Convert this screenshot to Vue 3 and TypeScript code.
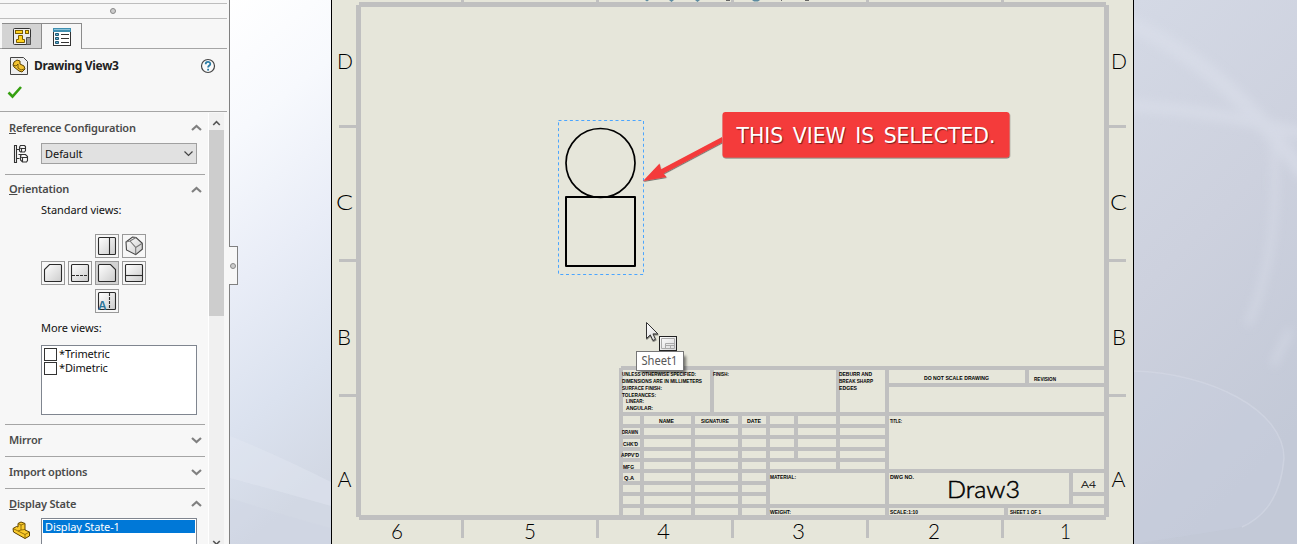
<script setup lang="ts">
type Rect = [number, number, number, number]
interface Label { t: string; x: number; y: number; w: number }

const spans = (xs: Array<[number, number]>, y: number, y2: number): Rect[] =>
  xs.map(([a, b]) => [a, y, b - a, y2 - y] as Rect)

const left: Array<[number, number]> = [[623, 640], [644, 691], [695, 738], [742, 766]]
const cells: Rect[] = [
  ...spans([[623, 710], [714, 836], [840, 885]], 370, 412),
  ...([[416, 424], [428, 435], [439, 447], [451, 458], [462, 469], [473, 481], [485, 492], [496, 504], [508, 515]] as Array<[number, number]>)
    .flatMap(([a, b]) => spans(left, a, b)),
  ...([[416, 424], [428, 435], [439, 447], [451, 458]] as Array<[number, number]>)
    .flatMap(([a, b]) => spans([[770, 794], [798, 836], [840, 885]], a, b)),
  ...spans([[770, 836], [840, 885]], 462, 469),
  ...spans([[770, 885]], 473, 504),
  ...spans([[770, 885]], 508, 515),
  ...spans([[889, 1025], [1029, 1104]], 370, 383),
  ...spans([[889, 1104]], 387, 412),
  ...spans([[889, 1104]], 416, 469),
  ...spans([[889, 1069]], 473, 504),
  ...spans([[1073, 1104]], 473, 492),
  ...spans([[1073, 1104]], 496, 504),
  ...spans([[889, 1004], [1008, 1104]], 508, 515),
]

const ticksY = [125, 259, 394]
const ticksX = [461, 596, 731, 866, 1001]

const zones: Label[] = [
  { t: 'D', x: 337, y: 69, w: 16 }, { t: 'C', x: 336, y: 210, w: 17 }, { t: 'B', x: 337, y: 345, w: 14 }, { t: 'A', x: 337.5, y: 487, w: 14 },
  { t: 'D', x: 1111, y: 69, w: 16 }, { t: 'C', x: 1110, y: 210, w: 17 }, { t: 'B', x: 1112, y: 345, w: 14 }, { t: 'A', x: 1111.5, y: 487, w: 14 },
  { t: '6', x: 391, y: 539, w: 12 }, { t: '5', x: 524, y: 539, w: 12 }, { t: '4', x: 657, y: 539, w: 13 },
  { t: '3', x: 792, y: 539, w: 13 }, { t: '2', x: 928, y: 539, w: 12 }, { t: '1', x: 1060, y: 539, w: 11 },
]

const notes: Label[] = [
  { t: 'UNLESS OTHERWISE SPECIFIED:', x: 622, y: 376, w: 74 },
  { t: 'DIMENSIONS ARE IN MILLIMETERS', x: 622, y: 383, w: 80 },
  { t: 'SURFACE FINISH:', x: 622, y: 390, w: 40 },
  { t: 'TOLERANCES:', x: 622, y: 397, w: 34 },
  { t: 'LINEAR:', x: 626, y: 403, w: 18 },
  { t: 'ANGULAR:', x: 626, y: 410, w: 27 },
  { t: 'FINISH:', x: 713, y: 376, w: 16 },
  { t: 'DEBURR AND', x: 839, y: 376, w: 33 },
  { t: 'BREAK SHARP', x: 839, y: 383, w: 34 },
  { t: 'EDGES', x: 839, y: 390, w: 18 },
  { t: 'NAME', x: 659, y: 423, w: 15 },
  { t: 'SIGNATURE', x: 701, y: 423, w: 28 },
  { t: 'DATE', x: 747, y: 423, w: 14 },
  { t: 'DRAWN', x: 622, y: 434, w: 16 },
  { t: "CHK'D", x: 623, y: 446, w: 15 },
  { t: "APPV'D", x: 621, y: 457, w: 18 },
  { t: 'MFG', x: 623, y: 469, w: 11 },
  { t: 'Q.A', x: 624, y: 480, w: 10 },
  { t: 'MATERIAL:', x: 770, y: 479, w: 26 },
  { t: 'WEIGHT:', x: 770, y: 514, w: 21 },
  { t: 'TITLE:', x: 890, y: 423, w: 12 },
  { t: 'DWG NO.', x: 890, y: 479, w: 24 },
  { t: 'SCALE:1:10', x: 890, y: 514, w: 28 },
  { t: 'SHEET 1 OF 1', x: 1010, y: 514, w: 31 },
  { t: 'DO NOT SCALE DRAWING', x: 924, y: 380, w: 65 },
  { t: 'REVISION', x: 1034, y: 381, w: 22 },
]

const moreViews = ['*Trimetric', '*Dimetric']
const collapsed = ['Mirror', 'Import options']
const viewButtons = ['top', 'iso', 'left', 'bottom', 'front', 'back', 'anno']
</script>

<template>
  <div class="app">
    <aside class="panel">
      <div class="grip"><i class="dot" /></div>
      <div class="tabs">
        <div class="tab">
          <svg width="20" height="20" viewBox="0 0 20 20">
            <rect x="1.5" y="1.5" width="17" height="16" rx="1" fill="#ececec" stroke="#333" />
            <rect x="3.500" y="3.500" width="7" height="3" fill="#ffd21f" stroke="#7a5d00" />
            <rect x="13.500" y="3.500" width="3" height="3" fill="#ffd21f" stroke="#7a5d00" />
            <path d="M6.500 8.500h4v4h2v3h-8v-3h2z" fill="#ffd21f" stroke="#7a5d00" />
            <path d="M14.500 17.500v-7h4v7z" fill="#999" stroke="#555" />
          </svg>
        </div>
        <div class="tab on">
          <svg width="20" height="20" viewBox="0 0 20 20">
            <rect x="1.500" y="1.500" width="17" height="17" fill="#fff" stroke="#333" />
            <rect x="1" y="1" width="18" height="4" fill="#3f8fb0" />
            <rect x="2" y="2" width="16" height="1" fill="#8cc4da" />
            <path d="M3.500 6.500h3v2h-3zM3.500 10.500h3v2h-3zM3.500 14.500h3v2h-3z" fill="#5fb0d0" stroke="#245a75" />
            <path d="M9 7.500h8M9 11.500h8M9 15.500h8" stroke="#333" />
          </svg>
        </div>
      </div>
      <div class="title">
        <svg width="18" height="18" viewBox="0 0 18 18">
          <path d="M.5 .5h13l4 4v13H.5z" fill="#eee" stroke="#444" />
          <path d="M3 8l1-3 3-2 3 1v3l4 2 1 3-3 3-3-1-5-4z" fill="#f2c230" stroke="#5c4200" />
          <path d="M3 8l3 1 2-2M8 7v4l3 2 3-1" fill="none" stroke="#5c4200" stroke-width=".8" />
        </svg>
        <b>Drawing View3</b>
        <svg class="help" width="16" height="16" viewBox="0 0 16 16">
          <circle cx="8" cy="8" r="6.500" fill="#fafafa" stroke="#444" stroke-width="1.200" />
          <path d="M5.700 6.200c0-3.200 4.600-3 4.600-.3 0 1.600-2.200 1.700-2.200 3.600" fill="none" stroke="#2b7ca5" stroke-width="1.800" />
          <rect x="7.200" y="10.800" width="1.800" height="1.800" fill="#2b7ca5" />
        </svg>
      </div>
      <div class="accept">
        <svg width="16" height="14" viewBox="0 0 16 14"><path d="M1.500 7.500l4 4 8.500-9.500" fill="none" stroke="#35a010" stroke-width="2.600" /></svg>
      </div>
      <div class="body">
        <div class="sections">
          <section class="ref">
            <header><span><u>R</u>eference Configuration</span><svg class="chev" viewBox="0 0 11 7"><path d="M1 6l4.500-4L10 6" /></svg></header>
            <div class="row">
              <svg width="16" height="20" viewBox="0 0 16 20" fill="none" stroke="#333" stroke-width="1.100">
                <path d="M1.500 1.500h2v17h-2zM3.500 5.500h3M3.500 14.500h3" />
                <path d="M6.500 3l1-1.500h4l1 1v4l-1 1.500h-4l-1-1zM6.500 4l2 .5h3.500M8.500 4.500V8" />
                <path d="M8.500 10.500h4l2 2v4l-1 1.500h-4l-2-2v-4zM7.500 13l2 .5h4.500M5.500 10.500h3M9.500 13.500V18" />
              </svg>
              <div class="select"><span>Default</span><svg viewBox="0 0 11 7"><path d="M1.500 1.500l4 4 4-4" fill="none" stroke="#444" stroke-width="1.200" /></svg></div>
            </div>
          </section>
          <section class="orient">
            <header><span><u>O</u>rientation</span><svg class="chev" viewBox="0 0 11 7"><path d="M1 6l4.500-4L10 6" /></svg></header>
            <p class="std">Standard views:</p>
            <div class="views">
              <div v-for="k in viewButtons" :key="k" class="vb" :class="k">
                <svg width="20" height="20" viewBox="0 0 20 20">
                  <defs><linearGradient :id="'g' + k" x2="1" y2="1"><stop stop-color="#fff" /><stop offset="1" stop-color="#ccc" /></linearGradient></defs>
                  <g :fill="`url(#g${k})`" stroke="#2b2b2b" stroke-width="1.100">
                    <path v-if="k === 'left'" d="M6.500 1.500h11q1 0 1 1v15q0 1-1 1h-15q-1 0-1-1v-11z" />
                    <path v-else-if="k === 'front'" d="M2.500 1.500h11l5 5v11q0 1-1 1h-15q-1 0-1-1v-15q0-1 1-1z" />
                    <template v-else-if="k === 'iso'">
                      <path d="M2 6l6.500-5 3.500.5 6.300 5.800v6l-6.600 5.400L2.500 14z" stroke="#444" />
                      <path d="M2 6l4-1 5.700 6.500v7M6 5l6-3.500M11.700 11.500l6.600-4.200" fill="none" stroke="#777" />
                    </template>
                    <rect v-else x="1.500" y="1.500" width="17" height="17" rx="1" />
                    <path v-if="k === 'top'" d="M12.500 2v16" />
                    <path v-if="k === 'back'" d="M2 12.500h16" />
                    <path v-if="k === 'bottom'" d="M2 12.500h16" stroke-dasharray="3 1" />
                    <path v-if="k === 'anno'" d="M12.500 2v16" stroke-dasharray="3 1" />
                  </g>
                  <text v-if="k === 'anno'" x="1" y="18.500" class="a">A</text>
                </svg>
              </div>
            </div>
            <p class="more">More views:</p>
            <div class="list">
              <label v-for="v in moreViews" :key="v"><i class="box" />{{ v }}</label>
            </div>
          </section>
          <section v-for="c in collapsed" :key="c" class="fold">
            <header><span>{{ c }}</span><svg class="chev" viewBox="0 0 11 7"><path d="M1 1l4.500 4L10 1" /></svg></header>
          </section>
          <section class="state">
            <header><span><u>D</u>isplay State</span><svg class="chev" viewBox="0 0 11 7"><path d="M1 6l4.500-4L10 6" /></svg></header>
            <div class="row">
              <svg width="19" height="20" viewBox="0 0 19 20">
                <path d="M1 8.500l3.500-2L6 7V3.500L9 2l4 1.500V10l4.500 2v4L13 18.500 1.500 12z" fill="#fbcb2c" stroke="#5c4200" />
                <path d="M1 8.500l5 2.500 7 3.500v4M6 3.500L9 5l4-1.500M9 5v5l-3 1M9 10l4-.5M13 14.500l4.500-2.500" fill="none" stroke="#7d5d00" stroke-width=".8" />
              </svg>
              <div class="states"><div class="sel">Display State-1</div></div>
            </div>
          </section>
        </div>
        <div class="scroll">
          <svg viewBox="0 0 11 7"><path d="M1.500 6l4-4 4 4" /></svg>
          <div class="thumb" />
          <svg class="dn" viewBox="0 0 11 7"><path d="M1.500 1l4 4 4-4" /></svg>
        </div>
      </div>
      <div class="flyout"><i class="dot" /></div>
    </aside>

    <main class="canvas">
      <svg width="1067" height="544" viewBox="230 0 1067 544">
        <defs>
          <linearGradient id="lbg" x2=".15" y2="1">
            <stop stop-color="#ffffff" /><stop offset=".25" stop-color="#f7f9fd" /><stop offset=".52" stop-color="#e9edf7" />
            <stop offset=".78" stop-color="#dbe2ef" /><stop offset="1" stop-color="#d2d8e4" />
          </linearGradient>
          <linearGradient id="rbg" x2=".3" y2="1">
            <stop stop-color="#d4d9e5" /><stop offset=".5" stop-color="#cdd1de" /><stop offset="1" stop-color="#c3c9d7" />
          </linearGradient>
          <linearGradient id="cur" x2="1" y2="1"><stop stop-color="#fff" /><stop offset="1" stop-color="#d8d8d8" /></linearGradient>
          <filter id="soft"><feGaussianBlur stdDeviation="5" /></filter>
          <filter id="drop" x="-20%" y="-20%" width="150%" height="150%"><feDropShadow dx=".4" dy="1" stdDeviation=".5" flood-color="#000" flood-opacity=".5" /></filter>
          <filter id="shade" x="-20%" y="-40%" width="150%" height="180%"><feGaussianBlur stdDeviation="1.500" /></filter>
        </defs>

        <rect x="230" width="101" height="544" fill="url(#lbg)" />
        <path d="M230 436q50 20 101 46v24q-50-14-101-28z" fill="#e4e9f3" opacity=".4" />
        <path d="M230 498q55 18 101 30v16H230z" fill="#ced4e1" opacity=".35" />
        <rect x="1134" width="163" height="544" fill="url(#rbg)" />
        <g fill="none" stroke="#dde1ec" filter="url(#soft)" opacity=".5">
          <path d="M1125 22Q1220 60 1305 175" stroke-width="16" />
          <path d="M1125 105Q1230 112 1305 135" stroke-width="12" />
          <path d="M1272 130Q1284 240 1248 325M1290 330L1273 365" stroke-width="6" />
        </g>
        <path d="M1134 371C1210 373 1284 410 1284 458Q1280 510 1242 527L1134 544z" fill="#cbd1e1" opacity=".3" />
        <path d="M1134 371C1210 373 1284 410 1284 458Q1280 510 1242 527" fill="none" stroke="#d8dce8" stroke-width="1.500" opacity=".5" />

        <g shape-rendering="crispEdges">
          <rect x="331" y="-1" width="803" height="546" fill="#000" />
          <rect x="332" y="-1" width="801" height="546" fill="#e6e6da" />
          <g fill="#c0c0c0">
            <rect x="359" y="2" width="747" height="5" /><rect x="359" y="515" width="747" height="5" />
            <rect x="356" y="5" width="5" height="512" /><rect x="1104" y="5" width="5" height="512" />
            <template v-for="y in ticksY" :key="y">
              <rect x="339" :y="y" width="17" height="3" /><rect x="1109" :y="y" width="17" height="3" />
            </template>
            <template v-for="x in ticksX" :key="x">
              <rect :x="x" y="0" width="3" height="2" /><rect :x="x" y="520" width="3" height="18" />
            </template>
            <path d="M621 366H1104V515H619V368h2z" />
          </g>
          <rect v-for="(c, i) in cells" :key="i" :x="c[0]" :y="c[1]" :width="c[2]" :height="c[3]" fill="#e6e6da" />
        </g>
        <path d="M645 0h4l-2 1.500zM669 0h5l-2.500 2zM695 0h5l-2.500 2zM752 0h8l-2 1.500h-4z" fill="#5d8ba0" />
        <path d="M726 0h4v1h-4zM781 0h1v1h-1zM805 0h4v1h-4z" fill="#666" />

        <g class="thin">
          <text v-for="(z, i) in zones" :key="i" :x="z.x" :y="z.y" :textLength="z.w" lengthAdjust="spacingAndGlyphs">{{ z.t }}</text>
        </g>
        <g class="notes">
          <text v-for="n in notes" :key="n.t" :x="n.x" :y="n.y" :textLength="n.w" lengthAdjust="spacingAndGlyphs">{{ n.t }}</text>
        </g>
        <text class="draw" x="947" y="498" textLength="73" lengthAdjust="spacingAndGlyphs">Draw3</text>
        <text class="size" x="1081" y="487.500" textLength="15" lengthAdjust="spacingAndGlyphs">A4</text>

        <rect x="558.500" y="120.500" width="85" height="154" fill="none" stroke="#4aa5ff" stroke-dasharray="3 2.700" />
        <circle cx="600.500" cy="163" r="34.500" fill="none" stroke="#000" stroke-width="1.700" />
        <rect x="566" y="197" width="69" height="69" fill="none" stroke="#000" stroke-width="2" stroke-linejoin="round" />

        <g filter="url(#drop)">
          <path d="M643 181L659.500 163.500 661 169.300 722 137V142.500L663.500 173.500 666.500 177z" fill="#f43b3b" />
          <rect x="722.500" y="112" width="287" height="45.500" rx="3" fill="#f43b3b" />
        </g>
        <text class="callout" x="736.500" y="142.500" textLength="259" lengthAdjust="spacingAndGlyphs">THIS VIEW IS SELECTED.</text>

        <g filter="url(#drop)">
          <path d="M646.500 322.500v16l3.800-3.600 2.600 5.600 2.600-1.200-2.500-5.400h4.900z" fill="url(#cur)" stroke="#333" />
        </g>
        <rect x="659.500" y="336.500" width="17" height="14" fill="url(#cur)" stroke="#222" />
        <path d="M661.500 338.500h13v10h-13zM665.500 348v-4.500h9M665.500 345.500h9M670.500 345.500v2.500" fill="none" stroke="#aaa" />
        <rect x="640" y="356" width="46" height="17" fill="#000" opacity=".5" filter="url(#shade)" />
        <rect x="636.500" y="351.500" width="47" height="19" fill="#fff" stroke="#767676" />
        <text class="tip" x="641.500" y="365" textLength="36" lengthAdjust="spacingAndGlyphs">Sheet1</text>
      </svg>
    </main>
  </div>
</template>

<style>
body { margin: 0; overflow: hidden; }
</style>

<style scoped>
.app { display: flex; width: 1297px; height: 544px; overflow: hidden; font: 11px/14px "Noto Sans", "Open Sans", sans-serif; letter-spacing: -.05px; color: #111; }
.app * { box-sizing: border-box; }
svg { display: block; flex: none; letter-spacing: 0; }
p { margin: 0; }
.panel { position: relative; width: 230px; height: 544px; background: #f7f7f7; border-right: 1px solid #808080; display: flex; flex-direction: column; }
.grip { margin-top: 3px; width: 227px; height: 16px; border: solid #bdbdbd; border-width: 1px 0; display: flex; justify-content: center; align-items: center; padding-right: 1px; }
.dot { display: block; width: 6px; height: 6px; border-radius: 50%; background: #ccc; border: 1px solid #888; }
.tabs { display: flex; height: 30px; width: 227px; padding: 4px 0 0 2px; background: linear-gradient(#a5a5a5, #a5a5a5) 0 29px / 100% 1px no-repeat; }
.tab { width: 40px; height: 26px; padding: 3px 0 0 10px; background: #d3d3d3; border: solid #8c8c8c; border-width: 1px 1px 1px 0; }
.tab.on { background: #f7f7f7; border-bottom: 0; }
.title { display: flex; align-items: center; height: 33px; padding: 0 11px 0 10px; }
.title b { margin-left: 6px; font-size: 12px; letter-spacing: -.33px; color: #222; }
.help { margin-left: auto; margin-right: 2px; }
.accept { height: 30px; width: 227px; border-bottom: 1px solid #a5a5a5; padding: 3px 0 0 7px; }
.body { display: flex; flex: 1; min-height: 0; }
.sections { width: 208px; overflow: hidden; padding-left: 5px; }
section { width: 200px; border-bottom: 1px solid #a5a5a5; }
header { display: flex; align-items: center; justify-content: space-between; height: 31px; padding: 0 3px 0 4px; font-weight: 600; letter-spacing: -.19px; color: #4a4a4a; }
.chev { width: 11px; height: 7px; }
.chev path { fill: none; stroke: #808080; stroke-width: 2.2; }
.ref { height: 63px; }
.ref .row { display: flex; align-items: center; padding-left: 8px; }
.select { margin-left: 12px; width: 156px; height: 21px; border: 1px solid #a0a0a0; background: #e1e1e1; display: flex; align-items: center; justify-content: space-between; padding: 0 2px 0 3px; }
.select svg { width: 11px; height: 7px; }
.orient { height: 250px; }
.orient header { height: 28px; }
.std, .more { padding-left: 36px; }
.views { display: grid; grid-template-columns: repeat(4, 24px); grid-template-rows: 24px 24px 24px; column-gap: 3px; row-gap: 3px; margin: 17px 0 0 36px; }
.vb { width: 24px; height: 24px; padding: 1px; border: 1px solid #999; background: #f7f7f7; }
.top { grid-area: 1 / 3; } .iso { grid-area: 1 / 4; }
.left { grid-area: 2 / 1; } .bottom { grid-area: 2 / 2; } .front { grid-area: 2 / 3; background: #d2d2d2; } .back { grid-area: 2 / 4; }
.anno { grid-area: 3 / 3; margin-top: 1px; }
.a { font: bold 12px "Liberation Sans", sans-serif; fill: #2b7499; }
.more { margin-top: 9px; }
.list { margin: 10px 0 0 36px; width: 156px; height: 70px; background: #fff; border: 1px solid #7f858f; padding: 1px 2px; }
.list label { display: flex; align-items: center; height: 14px; letter-spacing: -.15px; }
.box { width: 13px; height: 13px; border: 1px solid #333; background: #fff; margin-right: 2px; }
.fold { height: 32px; }
.fold header { height: 30px; }
.state header { height: 29px; }
.state .row { display: flex; padding-left: 7px; }
.state .row > svg { margin-top: 2px; }
.states { margin-left: 10px; width: 156px; height: 60px; border: 1px solid #7f858f; background: #fff; padding: 1px; }
.sel { height: 13px; line-height: 13px; background: #0078d7; color: #fff; padding-left: 2px; letter-spacing: -.12px; }
.scroll { position: relative; width: 17px; border-left: 1px solid #fff; border-right: 1px solid #f7f7f7; background: #f0f0f0; display: flex; flex-direction: column; align-items: center; padding-top: 7px; margin-top: 1px; overflow: hidden; }
.scroll svg { width: 9px; height: 6px; }
.scroll path { fill: none; stroke: #555; stroke-width: 2; }
.thumb { width: 15px; height: 186px; background: #cdcdcd; margin-top: 4px; flex: none; }
.scroll .dn { margin-top: 224px; }
.flyout { position: absolute; left: 229px; top: 246px; width: 9px; height: 39px; background: #f7f7f7; border: 1px solid #808080; border-left: 0; display: flex; align-items: center; justify-content: center; z-index: 2; }
.canvas { width: 1067px; height: 544px; }
.thin text { font: 300 20.8px Lato, sans-serif; fill: #000; }
.notes text { font: bold 5.3px "Liberation Sans", sans-serif; fill: #000; }
.draw { font: 300 23.5px Lato, sans-serif; fill: #000; stroke: #000; stroke-width: .5px; }
.size { font: 300 10.5px Lato, sans-serif; fill: #000; stroke: #000; stroke-width: .2px; }
.callout { font: 20.5px "DejaVu Sans", sans-serif; word-spacing: 3px; fill: #fff; text-shadow: 1px 1px 1px rgba(0, 0, 0, .5); }
.tip { font: 12px "Noto Sans", sans-serif; fill: #575757; }
</style>
